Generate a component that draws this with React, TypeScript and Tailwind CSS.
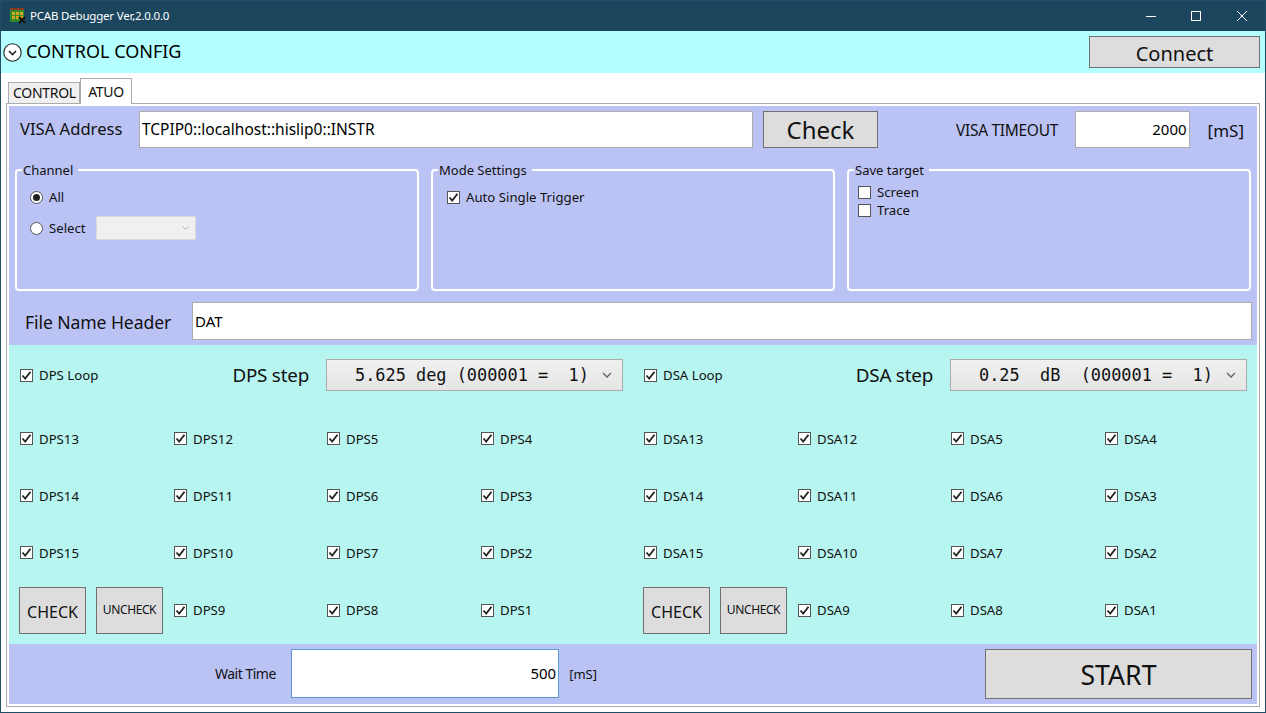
const uiFont = "[font-family:'Noto_Sans',sans-serif]";

function CheckBox({ label, checked = true, className = "" }: { label: string; checked?: boolean; className?: string }) {
  return (
    <div className={`flex items-center h-[14px] ${className}`}>
      <div className="w-[13px] h-[13px] border border-[#555] bg-white flex items-center justify-center shrink-0">
        {checked && (
          <svg width="11" height="11" viewBox="0 0 11 11">
            <path d="M1.5 5.5 L4.2 8.5 L9.5 1.8" fill="none" stroke="#222" strokeWidth="1.8" />
          </svg>
        )}
      </div>
      <span className="ml-[6px] text-[13.2px] leading-[14px] text-[#111] whitespace-nowrap">{label}</span>
    </div>
  );
}

function Radio({ label, checked = false }: { label: string; checked?: boolean }) {
  return (
    <div className="flex items-center">
      <div className="w-[13px] h-[13px] rounded-full border border-[#555] bg-white flex items-center justify-center shrink-0">
        {checked && <div className="w-[7px] h-[7px] rounded-full bg-[#222]" />}
      </div>
      <span className="ml-[6px] text-[13.2px] leading-none text-[#111]">{label}</span>
    </div>
  );
}

function GroupBox({ title, children }: { title: string; children?: React.ReactNode }) {
  return (
    <div className="relative w-[404px] h-[122px] border-2 border-white rounded-[4px]">
      <span className="absolute left-[5px] top-[-8px] bg-[#bbc3f5] px-[1px] pr-[5px] text-[13px] leading-[14px] text-[#111]">
        {title}
      </span>
      {children}
    </div>
  );
}

function GrayButton({ label, className }: { label: string; className: string }) {
  return (
    <button className={`bg-[#dddddd] border border-[#707070] text-[#111] leading-none flex items-center justify-center ${className}`}>
      {label}
    </button>
  );
}

function StepSelect({ text }: { text: string }) {
  return (
    <div className="w-[297px] h-[32px] border border-[#acacac] bg-linear-to-b from-[#f0f0f0] to-[#e5e5e5] flex items-center pl-[28px] pr-[10px]">
      <span className="font-['DejaVu_Sans_Mono',monospace] text-[16.9px] leading-none text-[#111] whitespace-pre">{text}</span>
      <svg className="ml-auto" width="10" height="6" viewBox="0 0 10 6">
        <path d="M1 1 L5 5 L9 1" fill="none" stroke="#606060" strokeWidth="1.3" />
      </svg>
    </div>
  );
}

function ChannelPane({ prefix, stepLabel, stepText, rows, last, className, selectGap }: {
  prefix: string;
  stepLabel: string;
  stepText: string;
  rows: number[][];
  last: number[];
  className: string;
  selectGap: string;
}) {
  return (
    <div className={className}>
      <div className="h-[60px] flex items-center">
        <CheckBox label={`${prefix} Loop`} />
        <span className="ml-auto mr-[17px] text-[18.8px] leading-none text-[#111] tracking-[-0.2px]">{stepLabel}</span>
        <div className={selectGap}>
          <StepSelect text={stepText} />
        </div>
      </div>
      <div className="mt-[5px]">
        {rows.map((row) => (
          <div key={row[0]} className="h-[57px] grid grid-cols-[154px_153px_154px_143px] items-center">
            {row.map((n) => (
              <CheckBox key={n} label={`${prefix}${n}`} />
            ))}
          </div>
        ))}
        <div className="h-[58px] grid grid-cols-[154px_153px_154px_143px] items-center">
          <div className="flex gap-[10px] ml-[-1px]">
            <GrayButton label="CHECK" className="w-[67px] h-[47px] pt-[3px] text-[16px]" />
            <GrayButton label="UNCHECK" className="w-[67px] h-[47px] text-[12px] tracking-[-0.4px]" />
          </div>
          {last.map((n) => (
            <CheckBox key={n} label={`${prefix}${n}`} />
          ))}
        </div>
      </div>
    </div>
  );
}

const gridRows = [
  [13, 12, 5, 4],
  [14, 11, 6, 3],
  [15, 10, 7, 2],
];

export default function App() {
  return (
    <div className={`w-[1266px] h-[713px] border border-[#1f4e66] bg-white overflow-hidden flex flex-col ${uiFont}`}>
      {/* title bar */}
      <div className="h-[30px] bg-[#1c465e] flex items-center shrink-0">
        <svg className="ml-[9px] mb-[1px]" width="16" height="16" viewBox="0 0 16 16">
          <rect x="0" y="0" width="14" height="3" fill="#8a3a20" />
          <rect x="0" y="2" width="14" height="12" fill="#2f8f2f" />
          <path d="M2 4h3v3H2zM6 4h3v3H6zM10 4h3v3h-3zM2 8h3v3H2zM6 8h3v3H6zM10 8h3v3h-3z" fill="#d9a520" />
          <path d="M9 15 L15 9 M9 9 L15 15" stroke="#111" strokeWidth="2" />
        </svg>
        <span className="ml-[4px] text-[11.5px] leading-none text-white tracking-[-0.2px]">PCAB Debugger Ver,2.0.0.0</span>
        <div className="ml-auto flex items-center">
          <svg width="10" height="10" viewBox="0 0 10 10">
            <path d="M0 5.5 H10" stroke="#fff" strokeWidth="1" />
          </svg>
          <svg className="ml-[35px]" width="10" height="10" viewBox="0 0 10 10">
            <rect x="0.5" y="0.5" width="9" height="9" fill="none" stroke="#fff" strokeWidth="1" />
          </svg>
          <svg className="ml-[36px] mr-[18px]" width="10" height="10" viewBox="0 0 10 10">
            <path d="M0 0 L10 10 M10 0 L0 10" stroke="#fff" strokeWidth="1" />
          </svg>
        </div>
      </div>

      {/* config header */}
      <div className="h-[42px] bg-[#b4ffff] flex items-center shrink-0">
        <svg className="ml-[2px]" width="19" height="19" viewBox="0 0 19 19">
          <circle cx="9.5" cy="9.5" r="8.7" fill="#fff" stroke="#222" strokeWidth="1.1" />
          <path d="M6 8 L9.5 11.5 L13 8" fill="none" stroke="#222" strokeWidth="1.6" />
        </svg>
        <span className="ml-[4px] pb-[2px] text-[18px] leading-none text-black">CONTROL CONFIG</span>
        <GrayButton label="Connect" className="ml-auto mr-[5px] w-[171px] h-[32px] pt-[4px] text-[20px]" />
      </div>

      {/* tabs */}
      <div className="h-[30px] pl-[7px] flex items-end shrink-0">
        <div className="w-[72px] h-[21px] bg-[#f0f0f0] border border-b-0 border-[#acacac] flex items-center justify-center pl-[1px] text-[14px] leading-none text-[#111] tracking-[-0.3px]">
          CONTROL
        </div>
        <div className="relative z-10 -mb-px w-[52px] h-[26px] bg-white border border-b-0 border-[#acacac] flex items-center justify-center text-[14px] leading-none text-[#111] tracking-[-0.3px]">
          ATUO
        </div>
      </div>

      {/* tab panel */}
      <div className="ml-[5px] w-[1254px] h-[604px] border border-[#acacac] p-[2px] shrink-0">
        <div className="bg-[#bbc3f5] h-[239px] pt-[5px]">
          <div className="h-[37px] flex items-center">
            <span className="ml-[11px] w-[103px] text-[16.6px] leading-none text-[#111] whitespace-nowrap">VISA Address</span>
            <div className="ml-[16px] w-[614px] h-[37px] bg-white border border-[#acacac] flex items-center pl-[2px] text-[15.5px] leading-none text-black">
              TCPIP0::localhost::hislip0::INSTR
            </div>
            <GrayButton label="Check" className="ml-[10px] w-[115px] h-[37px] text-[24px]" />
            <span className="ml-[78px] pt-[2px] text-[15.5px] leading-none text-[#111] tracking-[-0.3px]">VISA TIMEOUT</span>
            <div className="ml-auto w-[115px] h-[37px] bg-white border border-[#acacac] flex items-center justify-end pr-[2px] text-[15px] leading-none text-black">
              2000
            </div>
            <span className="ml-[18px] mr-[13px] pt-[2px] text-[17px] leading-none text-[#111]">[mS]</span>
          </div>

          <div className="mt-[21px] ml-[6px] flex gap-[12px]">
            <GroupBox title="Channel">
              <div className="pl-[13px] pt-[20px]">
                <Radio label="All" checked />
                <div className="mt-[12px] h-[24px] flex items-center">
                  <Radio label="Select" />
                  <div className="ml-[10px] w-[100px] h-[24px] bg-[#f0f0f0] border border-[#d9d9d9] flex items-center justify-end pr-[6px]">
                    <svg width="7" height="4" viewBox="0 0 7 4">
                      <path d="M0.5 0.5 L3.5 3.5 L6.5 0.5" fill="none" stroke="#aaa" strokeWidth="1" />
                    </svg>
                  </div>
                </div>
              </div>
            </GroupBox>
            <GroupBox title="Mode Settings">
              <div className="pl-[14px] pt-[19px]">
                <CheckBox label="Auto Single Trigger" />
              </div>
            </GroupBox>
            <GroupBox title="Save target">
              <div className="pl-[9px] pt-[14px] flex flex-col gap-[4px]">
                <CheckBox label="Screen" checked={false} />
                <CheckBox label="Trace" checked={false} />
              </div>
            </GroupBox>
          </div>

          <div className="mt-[11px] h-[38px] flex items-center">
            <span className="ml-[16px] pt-[3px] text-[17.6px] leading-none text-[#111] tracking-[-0.1px]">File Name Header</span>
            <div className="ml-auto mr-[5px] w-[1060px] h-[38px] bg-white border border-[#acacac] flex items-center pl-[2px] text-[15px] leading-none text-black">
              DAT
            </div>
          </div>
        </div>

        <div className="bg-[#b7f5f0] h-[299px] pl-[11px] flex">
          <ChannelPane className="w-[624px] shrink-0" selectGap="mr-[21px]" prefix="DPS" stepLabel="DPS step" stepText="5.625 deg (000001 =  1)" rows={gridRows} last={[9, 8, 1]} />
          <ChannelPane className="flex-1" selectGap="mr-[10px]" prefix="DSA" stepLabel="DSA step" stepText="0.25  dB  (000001 =  1)" rows={gridRows} last={[9, 8, 1]} />
        </div>

        <div className="bg-[#bbc3f5] h-[60px] flex items-center">
          <span className="ml-[206px] text-[14px] leading-none text-[#111] tracking-[-0.5px]">Wait Time</span>
          <div className="ml-auto mb-[1px] w-[268px] h-[49px] bg-white border border-[#5b9bd5] flex items-center justify-end pr-[2px] text-[15px] leading-none text-black">
            500
          </div>
          <span className="ml-[10px] text-[13px] leading-none text-[#111]">[mS]</span>
          <GrayButton label="START" className="ml-[388px] mr-[5px] w-[267px] h-[50px] pt-[2px] text-[26.7px]" />
        </div>
      </div>
    </div>
  );
}
